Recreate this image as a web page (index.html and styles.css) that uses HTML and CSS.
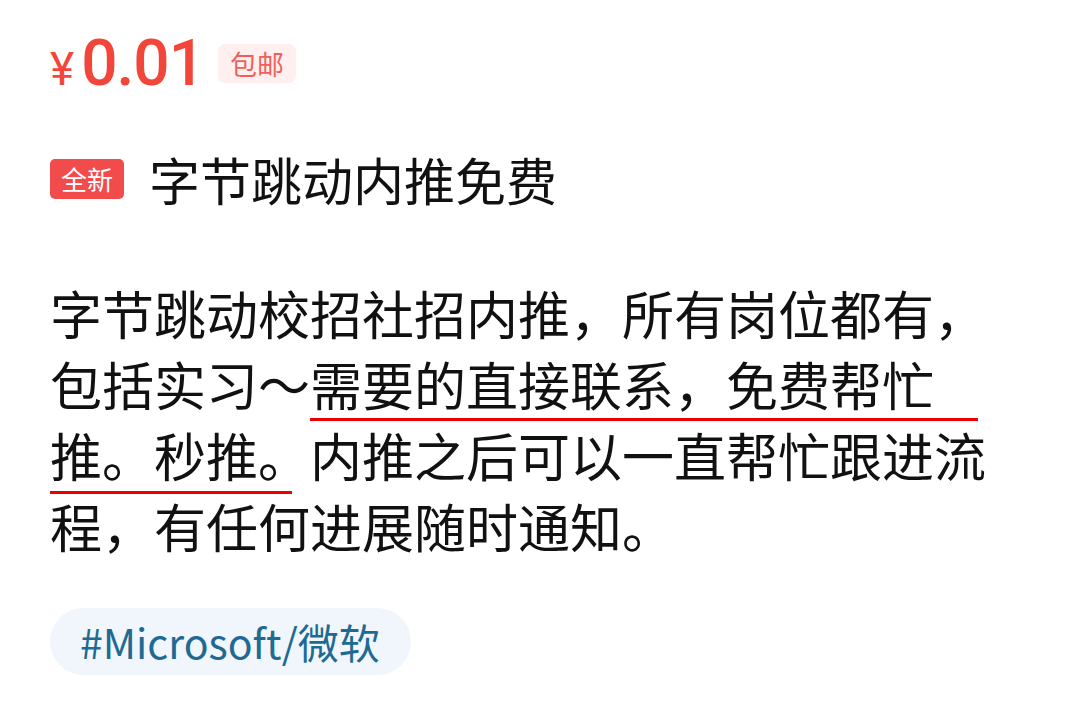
FILE: index.html
```html
<!DOCTYPE html>
<html lang="zh-CN">
<head>
<meta charset="utf-8">
<link rel="stylesheet" href="styles.css">
</head>
<body>
<div class="page">
  <div class="price-row">
    <span class="price"><span class="yen">¥</span><span class="amount">0.01</span></span>
    <span class="ship">包邮</span>
  </div>
  <div class="title-row">
    <span class="badge">全新</span>
    <span class="title">字节跳动内推免费</span>
  </div>
  <p class="desc">字节跳动校招社招内推，所有岗位都有，包括实习～<span class="mark mark-a">需要的直接联系，免费帮忙</span><span class="mark mark-b">推。秒推。</span>内推之后可以一直帮忙跟进流程，有任何进展随时通知。</p>
  <div class="tags">
    <span class="tag">#Microsoft/微软</span>
  </div>
</div>
</body>
</html>
```
FILE: styles.css
```css
html, body {
  margin: 0;
  padding: 0;
  background: #ffffff;
}
.page {
  padding: 30px 0 0 50px;
  font-family: "Noto Sans CJK SC", "Noto Sans", sans-serif;
  color: #111111;
}
.price-row {
  display: flex;
  align-items: center;
  height: 66px;
}
.price {
  color: #f2463a;
  font-family: Roboto, "Noto Sans CJK SC", sans-serif;
  display: flex;
  align-items: baseline;
}
.yen {
  font-size: 46px;
  margin-right: 7px;
}
.amount {
  font-size: 64px;
  font-weight: 500;
  letter-spacing: -1px;
}
.ship {
  margin-left: 14px;
  background: #fff0ef;
  color: #f0605a;
  font-size: 27px;
  line-height: 39px;
  padding: 0 12px;
  border-radius: 7px;
}
.title-row {
  display: flex;
  align-items: center;
  margin-top: 58px;
  height: 50px;
}
.badge {
  background: #f24b4b;
  color: #ffffff;
  font-size: 26px;
  line-height: 40px;
  padding: 0 11px;
  border-radius: 5px;
}
.title {
  margin-left: 25px;
  font-size: 51px;
  line-height: 50px;
}
.desc {
  margin: 73px 0 0 0;
  width: 950px;
  font-size: 52px;
  line-height: 71px;
}
.mark {
  background-image: linear-gradient(#ee0000, #ee0000);
  background-repeat: no-repeat;
}
.mark-a {
  padding-right: 44px;
  background-size: 100% 3px;
  background-position: left bottom;
}
.mark-b {
  padding-bottom: 2px;
  background-size: calc(100% - 18px) 3px;
  background-position: left bottom;
}
.tags {
  margin-top: 47px;
}
.tag {
  display: inline-block;
  background: #f0f6fc;
  color: #1e6a92;
  font-size: 41px;
  line-height: 67px;
  padding: 0 31px 0 30px;
  border-radius: 34px;
}
```
